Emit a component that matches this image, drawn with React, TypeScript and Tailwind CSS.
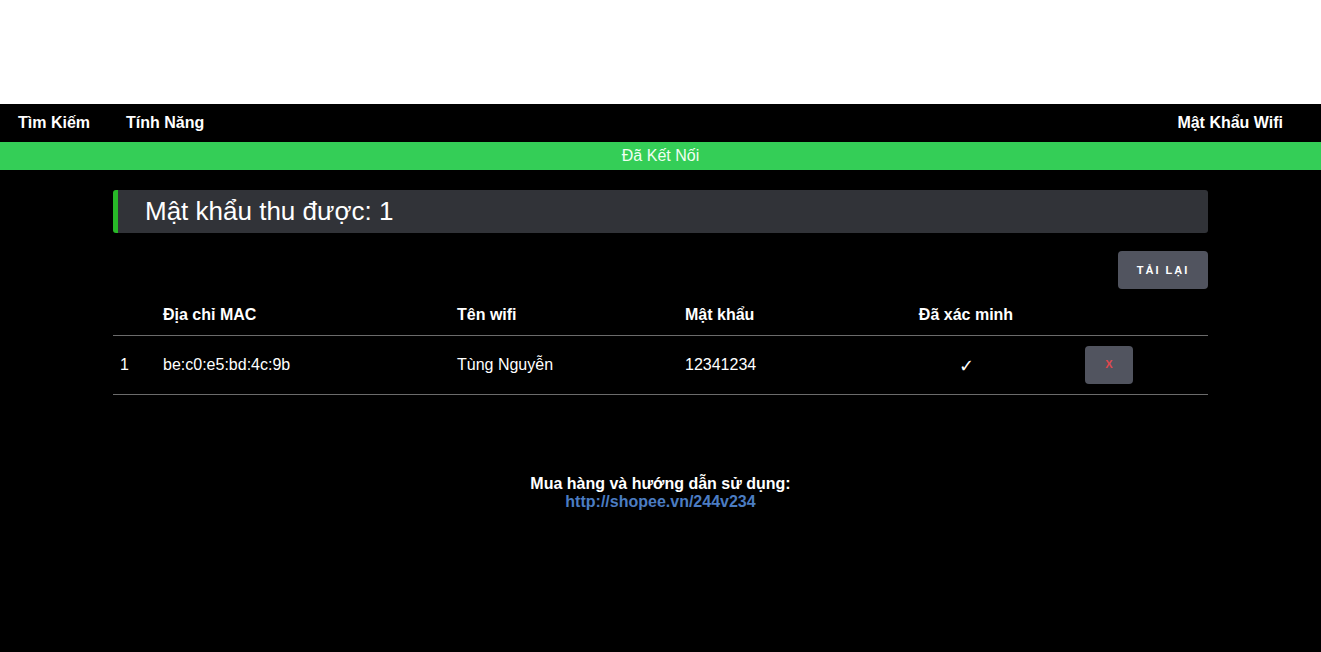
import React from 'react';

const rows = [
  { id: 1, mac: 'be:c0:e5:bd:4c:9b', ssid: 'Tùng Nguyễn', password: '12341234', verified: true },
];

const App: React.FC = () => {
  return (
    <div className="min-h-[652px] bg-black font-['Liberation_Sans',Arial,sans-serif] text-white">
      {/* blank top area */}
      <div className="h-[104px] bg-white" />

      {/* Nav bar */}
      <nav className="flex h-[38px] items-center bg-black px-[18px] text-base font-bold">
        <a className="mr-[36px]">Tìm Kiếm</a>
        <a>Tính Năng</a>
        <a className="ml-auto mr-[20px]">Mật Khẩu Wifi</a>
      </nav>

      {/* Status */}
      <div className="flex h-[28px] items-center justify-center bg-[#34ce57] text-base text-[#f0fff2]">
        Đã Kết Nối
      </div>

      <main className="mx-auto w-[1095px] pt-[20px]">
        {/* Title box */}
        <div className="flex h-[43px] items-center rounded-[3px] border-l-[5px] border-[#28b828] bg-[#313338] pb-[2px] pl-[27px]">
          <h1 className="text-[26px] leading-none">Mật khẩu thu được: 1</h1>
        </div>

        <div className="mt-[18px] flex justify-end">
          <button className="h-[38px] w-[90px] rounded-[4px] bg-[#51545f] text-[11px] font-bold tracking-[2px] text-white">
            TẢI LẠI
          </button>
        </div>

        {/* Table */}
        <table className="mt-[7px] w-full table-fixed border-collapse text-base">
          <colgroup>
            <col className="w-[42px]" />
            <col className="w-[302px]" />
            <col className="w-[228px]" />
            <col className="w-[185px]" />
            <col className="w-[192px]" />
            <col />
          </colgroup>
          <thead>
            <tr className="h-[39px] border-b border-[#6b6b6b] font-bold">
              <th className="px-[7px] text-left" />
              <th className="px-[8px] text-left">Địa chỉ MAC</th>
              <th className="text-left">Tên wifi</th>
              <th className="text-left">Mật khẩu</th>
              <th className="text-center">Đã xác minh</th>
              <th />
            </tr>
          </thead>
          <tbody>
            {rows.map(r => (
              <tr key={r.id} className="h-[59px] border-b border-[#6b6b6b]">
                <td className="px-[7px]">{r.id}</td>
                <td className="px-[8px]">{r.mac}</td>
                <td>{r.ssid}</td>
                <td>{r.password}</td>
                <td className="pt-[2px] text-center text-lg">{r.verified ? '✓' : ''}</td>
                <td className="pl-[23px]">
                  <button className="h-[38px] w-[48px] rounded-[4px] bg-[#51545f] text-[11px] font-bold text-[#e0484e]">
                    X
                  </button>
                </td>
              </tr>
            ))}
          </tbody>
        </table>

        {/* Footer */}
        <div className="mt-[80px] text-center font-bold leading-[18px]">
          <p>Mua hàng và hướng dẫn sử dụng:</p>
          <a className="text-[#4b7cc2]">http://shopee.vn/244v234</a>
        </div>
      </main>
    </div>
  );
};

export default App;
